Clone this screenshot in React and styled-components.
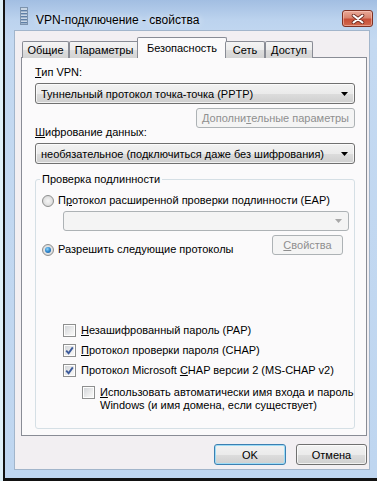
import React from 'react';
import styled, { createGlobalStyle, css } from 'styled-components';

const GlobalStyle = createGlobalStyle`
  html, body {
    margin: 0;
    padding: 0;
  }
  body {
    font-family: 'Liberation Sans', Arial, sans-serif;
    font-size: 11px;
    color: #000;
  }
  * {
    box-sizing: border-box;
  }
`;

const tabs = [
  { label: 'Общие', width: 47 },
  { label: 'Параметры', width: 70 },
  { label: 'Безопасность', width: 86, active: true },
  { label: 'Сеть', width: 40 },
  { label: 'Доступ', width: 48 },
];

const buttonFace = css`
  border: 1px solid #707070;
  border-radius: 3px;
  background: linear-gradient(#f2f2f2 0%, #ebebeb 50%, #dddddd 51%, #cfcfcf 100%);
  box-shadow: inset 0 0 0 1px rgba(255, 255, 255, 0.7);
`;

const disabledFace = css`
  border: 1px solid #adb2b5;
  border-radius: 3px;
  background: #f4f4f4;
  color: #8f8f8f;
`;

const CloseIcon = () => (
  <svg width="14" height="10" viewBox="0 0 14 10">
    <path d="M2.5 1.5 L11.5 8.5 M11.5 1.5 L2.5 8.5" stroke="#6d2d24" strokeWidth="3.6" strokeLinecap="round" />
    <path d="M2.5 1.5 L11.5 8.5 M11.5 1.5 L2.5 8.5" stroke="#ffffff" strokeWidth="2" strokeLinecap="round" />
  </svg>
);

const ConnectionIcon = () => (
  <svg width="8" height="18" viewBox="0 0 8 18">
    <rect x="0.5" y="0.5" width="7" height="17" fill="#c9d6e4" stroke="#7d93ac" />
    {[3, 6, 9, 12, 15].map((y) => (
      <rect key={y} x="1" y={y} width="6" height="1.4" fill="#5f7fa6" />
    ))}
  </svg>
);

const Arrow = ({ disabled }) => (
  <svg width="7" height="4" viewBox="0 0 7 4">
    <path d="M0 0 H7 L3.5 4 Z" fill={disabled ? '#a8a8a8' : '#000'} />
  </svg>
);

const Tick = () => (
  <svg width="9" height="9" viewBox="0 0 9 9">
    <path d="M1.2 4.6 L3.6 7.2 L7.8 1.4" fill="none" stroke="#3d5b9b" strokeWidth="1.9" />
  </svg>
);

const ComboBox = ({ children, disabled, width }) => (
  <Combo $disabled={disabled} $width={width}>
    <ComboText>{children}</ComboText>
    <Arrow disabled={disabled} />
  </Combo>
);

const CheckOption = ({ checked, children }) => (
  <CheckRow>
    <CheckBox>{checked && <Tick />}</CheckBox>
    <OptionText>{children}</OptionText>
  </CheckRow>
);

const App = () => {
  return (
    <>
      <GlobalStyle />
      <Screen>
        <Window>
          <TitleBar>
            <ConnectionIcon />
            <Title>VPN-подключение - свойства</Title>
            <CloseButton>
              <CloseIcon />
            </CloseButton>
          </TitleBar>
          <Body>
            <TabRow>
              {tabs.map((tab) => (
                <Tab key={tab.label} $width={tab.width} $active={tab.active}>
                  {tab.label}
                </Tab>
              ))}
            </TabRow>
            <Panel>
              <FieldLabel>
                <u>Т</u>ип VPN:
              </FieldLabel>
              <ComboBox>Туннельный протокол точка-точка (PPTP)</ComboBox>
              <ButtonRow>
                <PushButton $disabled $width={159}>
                  Дополни<u>т</u>ельные параметры
                </PushButton>
              </ButtonRow>
              <FieldLabel $gap={-1}>
                <u>Ш</u>ифрование данных:
              </FieldLabel>
              <ComboBox>необязательное (подключиться даже без шифрования)</ComboBox>
              <Group>
                <Legend>Проверка подлинности</Legend>
                <RadioOption>
                  <RadioMark />
                  <OptionText>
                    П<u>р</u>отокол расширенной проверки подлинности (EAP)
                  </OptionText>
                </RadioOption>
                <SubCombo>
                  <ComboBox disabled width={286} />
                </SubCombo>
                <SplitRow>
                  <RadioOption $offset={8}>
                    <RadioMark $checked />
                    <OptionText>Разрешить следующие протоколы</OptionText>
                  </RadioOption>
                  <PushButton $disabled $width={71}>
                    <u>С</u>войства
                  </PushButton>
                </SplitRow>
                <CheckList>
                  <CheckOption>
                    <u>Н</u>езашифрованный пароль (PAP)
                  </CheckOption>
                  <CheckOption checked>
                    <u>П</u>ротокол проверки пароля (CHAP)
                  </CheckOption>
                  <CheckOption checked>
                    Протокол Microsoft <u>C</u>HAP версии 2 (MS-CHAP v2)
                  </CheckOption>
                  <Nested>
                    <CheckOption>
                      <u>И</u>спользовать автоматически имя входа и пароль
                      <br />
                      Windows (и имя домена, если существует)
                    </CheckOption>
                  </Nested>
                </CheckList>
              </Group>
            </Panel>
            <Footer>
              <PushButton $default $width={72}>
                OK
              </PushButton>
              <PushButton $width={71}>Отмена</PushButton>
            </Footer>
          </Body>
        </Window>
      </Screen>
    </>
  );
};

const Screen = styled.div`
  width: 377px;
  height: 481px;
  overflow: hidden;
  padding-left: 3px;
  background: #dff0f8;
`;

const Window = styled.div`
  width: 380px;
  height: 481px;
  border-left: 2px solid #121212;
  border-bottom: 3px solid #121212;
  padding: 0 0 0 9px;
  background: linear-gradient(180deg, #a2bee2 0px, #bcd3ee 20px, #c4d9f1 40px, #bfd6f0 100%);
  display: flex;
  flex-direction: column;
`;

const TitleBar = styled.div`
  height: 30px;
  display: flex;
  align-items: center;
  padding-left: 6px;
  padding-right: 10px;
  padding-top: 2px;
`;

const Title = styled.div`
  margin-left: 8px;
  padding-top: 7px;
  font-size: 12px;
  color: #000;
  text-shadow: 0 0 6px rgba(255, 255, 255, 0.9);
`;

const CloseButton = styled.div`
  margin-left: auto;
  align-self: flex-start;
  margin-top: 8px;
  width: 31px;
  height: 17px;
  border: 1px solid #7e3124;
  border-radius: 3px;
  background: linear-gradient(#eaa998 0%, #d98570 45%, #c84e37 55%, #d06a4f 100%);
  box-shadow: inset 0 0 0 1px rgba(255, 210, 200, 0.5);
  display: flex;
  align-items: center;
  justify-content: center;
`;

const Body = styled.div`
  width: 356px;
  height: 440px;
  border: 1px solid #a2b5cb;
  background: #f2eff2;
  padding: 6px 0 0 6px;
  display: flex;
  flex-direction: column;
`;

const TabRow = styled.div`
  height: 21px;
  display: flex;
  align-items: flex-end;
  padding-left: 1px;
  margin-bottom: -1px;
  position: relative;
  z-index: 1;
`;

const Tab = styled.div`
  width: ${(p) => p.$width}px;
  height: 17px;
  border: 1px solid #898c95;
  border-bottom: none;
  border-radius: 2px 2px 0 0;
  background: linear-gradient(#f4f4f4 0%, #ececec 50%, #dedede 51%, #d3d3d3 100%);
  display: flex;
  align-items: center;
  justify-content: center;
  white-space: nowrap;

  ${(p) =>
    p.$active &&
    css`
      width: ${p.$width + 4}px;
      height: 21px;
      margin: 0 -2px;
      padding-bottom: 1px;
      background: #fbfafb;
    `}
`;

const Panel = styled.div`
  width: 346px;
  height: 379px;
  border: 1px solid #898c95;
  background: #fbfafb;
  padding: 9px 11px 0 13px;
  display: flex;
  flex-direction: column;
`;

const FieldLabel = styled.div`
  line-height: 10px;
  height: 10px;
  margin-top: ${(p) => p.$gap || 0}px;
  margin-bottom: 6px;
  white-space: nowrap;
`;

const Combo = styled.div`
  ${(p) => (p.$disabled ? disabledFace : buttonFace)}
  width: ${(p) => (p.$width ? `${p.$width}px` : '100%')};
  height: ${(p) => (p.$disabled ? 20 : 21)}px;
  display: flex;
  align-items: center;
  padding: 0 6px 0 5px;
`;

const ComboText = styled.span`
  flex: 1;
  white-space: nowrap;
  overflow: hidden;
`;

const ButtonRow = styled.div`
  display: flex;
  justify-content: flex-end;
  margin-top: 4px;
`;

const PushButton = styled.div`
  ${(p) => (p.$disabled ? disabledFace : buttonFace)}
  width: ${(p) => p.$width}px;
  height: ${(p) => (p.$disabled ? 20 : 21)}px;
  display: flex;
  align-items: center;
  justify-content: center;
  white-space: nowrap;

  ${(p) =>
    p.$default &&
    css`
      border-color: #3c7fb1;
      box-shadow: inset 0 0 0 1px #9edcf6;
    `}
`;

const Group = styled.div`
  position: relative;
  margin-top: 15px;
  height: 250px;
  border: 1px solid #d5dfe5;
  border-radius: 3px;
  padding: 14px 11px 0 6px;
  display: flex;
  flex-direction: column;
`;

const Legend = styled.span`
  position: absolute;
  top: -7px;
  left: 4px;
  padding: 0 2px;
  line-height: 13px;
  background: #fbfafb;
`;

const RadioOption = styled.div`
  display: flex;
  align-items: center;
  gap: 4px;
  height: 13px;
  margin-top: ${(p) => p.$offset || 0}px;
`;

const RadioMark = styled.span`
  flex: none;
  width: 12px;
  height: 12px;
  border-radius: 50%;
  border: 1px solid #8e8f8f;
  background: radial-gradient(circle at 50% 50%, #f6f6f6 0%, #e2e2e2 55%, #c8c8c8 100%);
  display: flex;
  align-items: center;
  justify-content: center;

  &::after {
    content: '';
    display: ${(p) => (p.$checked ? 'block' : 'none')};
    width: 6px;
    height: 6px;
    border-radius: 50%;
    background: radial-gradient(circle at 40% 35%, #8fd6fb 0%, #2f86cc 50%, #164f8e 100%);
  }
`;

const OptionText = styled.span`
  line-height: 13px;
  white-space: nowrap;
`;

const SubCombo = styled.div`
  margin: 4px 0 0 21px;
`;

const SplitRow = styled.div`
  display: flex;
  justify-content: space-between;
  align-items: flex-start;
  margin-top: 4px;
`;

const CheckList = styled.div`
  display: flex;
  flex-direction: column;
  gap: 7px;
  margin: 68px 0 0 21px;
`;

const CheckRow = styled.div`
  display: flex;
  align-items: flex-start;
  gap: 5px;
`;

const CheckBox = styled.span`
  flex: none;
  width: 13px;
  height: 13px;
  border: 1px solid #8e8f8f;
  background: linear-gradient(135deg, #cfd2d6 0%, #f1f1f1 70%, #fafafa 100%);
  box-shadow: inset 0 0 0 1px #fdfdfd;
  display: flex;
  align-items: center;
  justify-content: center;
`;

const Nested = styled.div`
  margin: 2px 0 0 19px;
`;

const Footer = styled.div`
  width: 346px;
  display: flex;
  justify-content: flex-end;
  gap: 10px;
  margin-top: 8px;
`;

export default App;
